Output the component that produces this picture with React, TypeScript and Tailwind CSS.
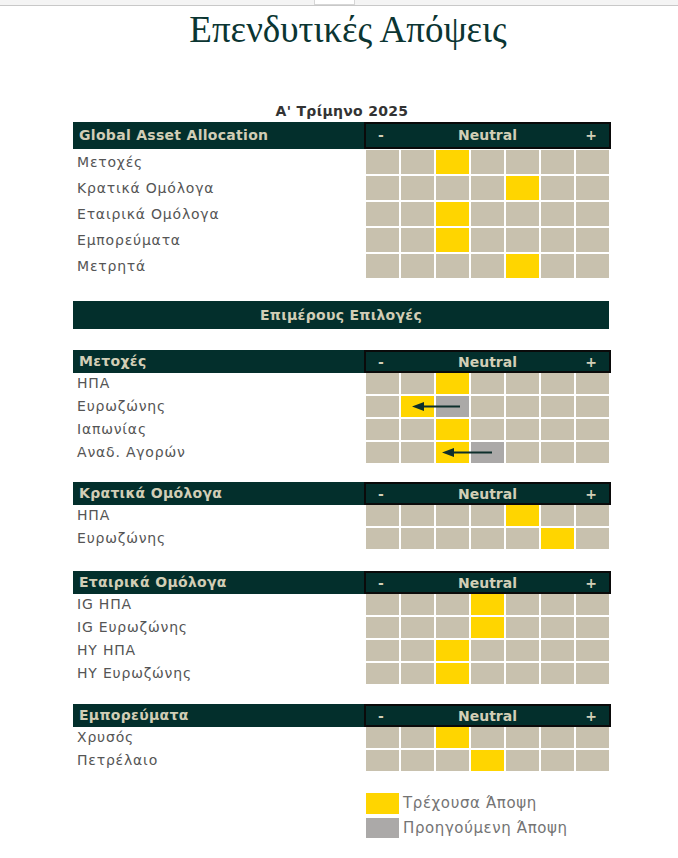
import React from "react";

type RowDef = { label: string; y: number; g?: number; arrow?: { left: number; width: number } };

const FONT = { fontFamily: '"DejaVu Sans", Verdana, sans-serif' };

function Cells({ yellow, gray, tall, arrow }: { yellow: number; gray?: number; tall: boolean; arrow?: { left: number; width: number } }) {
  const idx = [0, 1, 2, 3, 4, 5, 6];
  return (
    <div className="relative flex gap-[2px]">
      {idx.map((i) => (
        <div
          key={i}
          className={
            (tall ? "h-[24px] w-[33px] " : "h-[21px] w-[33px] ") +
            (i === yellow ? "bg-[#ffd500]" : i === gray ? "bg-[#aba9a8]" : "bg-[#c8c1ae]")
          }
        />
      ))}
      {arrow && (
        <svg
          className="absolute top-0"
          style={{ left: arrow.left, width: arrow.width }}
          height={21}
          viewBox={`0 0 ${arrow.width} 21`}
        >
          <line x1={9} y1={10.5} x2={arrow.width} y2={10.5} stroke="#0d2f2c" strokeWidth={2} />
          <polygon points="0,10.5 12,6 12,15" fill="#0d2f2c" />
        </svg>
      )}
    </div>
  );
}

function Header({ title, tall }: { title: string; tall: boolean }) {
  return (
    <div className={"flex " + (tall ? "h-[27px]" : "h-[23px]")}>
      <div className="w-[291px] bg-[#032f2c] flex items-center pl-[6px] text-[14px] font-bold text-[#d2ceb6] tracking-[0.3px]">
        {title}
      </div>
      <div className="w-[247px] bg-[#032f2c] border-2 border-[#0a0a0a] grid grid-cols-[1fr_auto_1fr] items-center px-[12px] text-[14px] font-bold text-[#d2ceb6]">
        <span className="justify-self-start">-</span>
        <span>Neutral</span>
        <span className="justify-self-end">+</span>
      </div>
    </div>
  );
}

function Table({ title, rows, tall }: { title: string; rows: RowDef[]; tall: boolean }) {
  return (
    <div className="flex flex-col">
      <Header title={title} tall={tall} />
      <div className={"flex flex-col gap-[2px] " + (tall ? "mt-[1px]" : "mt-[0px]")}>
        {rows.map((r) => (
          <div key={r.label} className="flex items-center">
            <div className="w-[293px] pl-[4px] text-[14px] text-[#555555] tracking-[0.8px]">{r.label}</div>
            <Cells yellow={r.y} gray={r.g} tall={tall} arrow={r.arrow} />
          </div>
        ))}
      </div>
    </div>
  );
}

export default function App() {
  const global: RowDef[] = [
    { label: "Μετοχές", y: 2 },
    { label: "Κρατικά Ομόλογα", y: 4 },
    { label: "Εταιρικά Ομόλογα", y: 2 },
    { label: "Εμπορεύματα", y: 2 },
    { label: "Μετρητά", y: 4 },
  ];
  const stocks: RowDef[] = [
    { label: "ΗΠΑ", y: 2 },
    { label: "Ευρωζώνης", y: 1, g: 2, arrow: { left: 46, width: 48 } },
    { label: "Ιαπωνίας", y: 2 },
    { label: "Αναδ. Αγορών", y: 2, g: 3, arrow: { left: 76, width: 50 } },
  ];
  const govs: RowDef[] = [
    { label: "ΗΠΑ", y: 4 },
    { label: "Ευρωζώνης", y: 5 },
  ];
  const corps: RowDef[] = [
    { label: "IG ΗΠΑ", y: 3 },
    { label: "IG Ευρωζώνης", y: 3 },
    { label: "HY ΗΠΑ", y: 2 },
    { label: "HY Ευρωζώνης", y: 2 },
  ];
  const comm: RowDef[] = [
    { label: "Χρυσός", y: 2 },
    { label: "Πετρέλαιο", y: 3 },
  ];

  return (
    <div className="w-[678px] h-[858px] bg-white overflow-hidden" style={FONT}>
      <div className="h-[6px] bg-[#f4f4f4] border-b border-[#c8c8c8] flex">
        <div className="ml-[314px] w-[41px] h-[5px] bg-white border-x border-b border-[#d6d6d6]" />
      </div>
      <div
        className="text-center text-[37px] leading-[40px] text-[#0b3532] pt-[4px] pl-[18px]"
        style={{ fontFamily: '"Liberation Serif", "DejaVu Serif", serif' }}
      >
        Επενδυτικές Απόψεις
      </div>
      <div className="ml-[73px] w-[538px] mt-[52px]">
        <div className="text-center text-[14px] leading-[18px] font-bold text-[#333333] tracking-[0.3px]">Α' Τρίμηνο 2025</div>
        <div className="mt-[2px]">
          <Table title="Global Asset Allocation" rows={global} tall={true} />
        </div>
        <div className="mt-[23px] w-[536px] h-[28px] bg-[#032f2c] flex items-center justify-center text-[14px] font-bold text-[#d2ceb6] tracking-[0.3px]">
          Επιμέρους Επιλογές
        </div>
        <div className="mt-[21px]">
          <Table title="Μετοχές" rows={stocks} tall={false} />
        </div>
        <div className="mt-[19px]">
          <Table title="Κρατικά Ομόλογα" rows={govs} tall={false} />
        </div>
        <div className="mt-[22px]">
          <Table title="Εταιρικά Ομόλογα" rows={corps} tall={false} />
        </div>
        <div className="mt-[20px]">
          <Table title="Εμπορεύματα" rows={comm} tall={false} />
        </div>
        <div className="mt-[21px] ml-[293px] flex flex-col gap-[2px] text-[15px] text-[#747474] tracking-[0.6px]">
          <div className="flex items-center">
            <div className="w-[33px] h-[21px] bg-[#ffd500]" />
            <span className="ml-[4px]">Τρέχουσα Άποψη</span>
          </div>
          <div className="flex items-center">
            <div className="w-[33px] h-[20px] bg-[#aba9a8]" />
            <span className="ml-[4px]">Προηγούμενη Άποψη</span>
          </div>
        </div>
      </div>
    </div>
  );
}
